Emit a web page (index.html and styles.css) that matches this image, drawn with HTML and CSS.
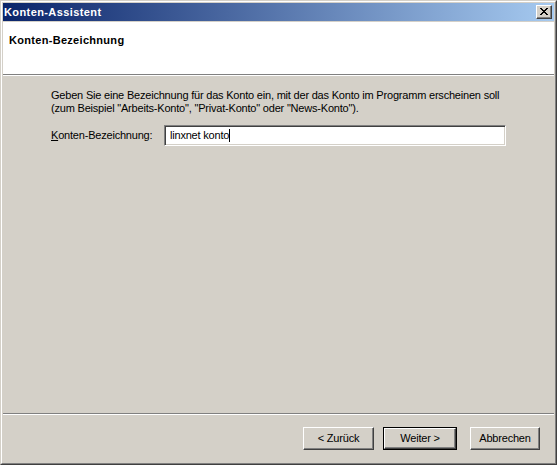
FILE: index.html
```html
<!DOCTYPE html>
<html>
<head>
<meta charset="utf-8">
<link rel="stylesheet" href="styles.css">
</head>
<body>
<div class="window">
  <div class="frame">
    <div class="titlebar">
      <span class="title">Konten-Assistent</span>
      <div class="close">
        <svg width="8" height="7" viewBox="0 0 8 7"><path d="M0 0h2v1h-2zM6 0h2v1h-2zM1 1h2v1h-2zM5 1h2v1h-2zM2 2h4v1h-4zM3 3h2v1h-2zM2 4h4v1h-4zM1 5h2v1h-2zM5 5h2v1h-2zM0 6h2v1h-2zM6 6h2v1h-2z" fill="#000"/></svg>
      </div>
    </div>
    <div class="client">
      <div class="header">Konten-Bezeichnung</div>
      <div class="content">
        <p class="desc">Geben Sie eine Bezeichnung für das Konto ein, mit der das Konto im Programm erscheinen soll<br>(zum Beispiel "Arbeits-Konto", "Privat-Konto" oder "News-Konto").</p>
        <div class="field">
          <span class="label"><u>K</u>onten-Bezeichnung:</span>
          <div class="input"><span class="val">linxnet konto</span><span class="caret"></span></div>
        </div>
      </div>
      <div class="footer">
        <div class="btn btn-back">&lt; Zurück</div>
        <div class="btn btn-next"><div class="inner">Weiter &gt;</div></div>
        <div class="btn btn-cancel">Abbrechen</div>
      </div>
    </div>
  </div>
</div>
</body>
</html>
```

FILE: styles.css
```css
html, body {
  margin: 0;
  padding: 0;
  background: #d4d0c8;
}
.window {
  width: 557px;
  height: 465px;
  box-sizing: border-box;
  border: 1px solid;
  border-color: #d4d0c8 #404040 #404040 #d4d0c8;
  font-family: "Liberation Sans", Arial, sans-serif;
  font-size: 11px;
  letter-spacing: -0.2px;
  color: #000;
}
.frame {
  height: 100%;
  box-sizing: border-box;
  border: 1px solid;
  border-color: #fff #808080 #808080 #fff;
  padding: 1px;
  background: #d4d0c8;
  display: flex;
  flex-direction: column;
}
.titlebar {
  height: 18px;
  background: linear-gradient(to right, #0a246a, #a6caf0);
  display: flex;
  align-items: center;
  justify-content: space-between;
  padding-left: 1px;
  padding-right: 2px;
}
.title {
  color: #fff;
  font-weight: bold;
  font-size: 11px;
  letter-spacing: 0.4px;
  line-height: 18px;
}
.close {
  width: 16px;
  height: 14px;
  box-sizing: border-box;
  background: #d4d0c8;
  border: 1px solid;
  border-color: #fff #404040 #404040 #fff;
  box-shadow: inset -1px -1px 0 #808080;
  display: flex;
  align-items: center;
  justify-content: center;
  padding: 0 1px 1px 0;
}
.close svg { display: block; }
.client {
  margin-top: 1px;
  flex: 1;
  display: flex;
  flex-direction: column;
}
.header {
  background: #fff;
  border-bottom: 1px solid #808080;
  box-shadow: 0 1px 0 #fff;
  font-weight: bold;
  letter-spacing: 0.3px;
  padding-left: 6px;
  line-height: 13px;
  padding-top: 12px;
  box-sizing: border-box;
  height: 53px;
}
.content {
  flex: 1;
  margin-top: 1px;
  padding: 13px 0 0 48px;
}
.desc {
  margin: 0;
  line-height: 13px;
}
.field {
  margin-top: 10px;
  display: flex;
  align-items: center;
}
.label {
  width: 113px;
  line-height: 13px;
}
.input {
  width: 342px;
  height: 21px;
  box-sizing: border-box;
  background: #fff;
  border: 1px solid;
  border-color: #808080 #fff #fff #808080;
  box-shadow: inset 1px 1px 0 #404040, inset -1px -1px 0 #d4d0c8;
  display: flex;
  align-items: center;
  padding-left: 5px;
}
.val { line-height: 13px; }
.caret {
  width: 1px;
  height: 13px;
  background: #000;
}
.footer {
  border-top: 1px solid #808080;
  box-shadow: inset 0 1px 0 #fff;
  height: 49px;
  box-sizing: border-box;
  display: flex;
  justify-content: flex-end;
  align-items: flex-start;
  padding: 13px 14px 0 0;
}
.btn {
  height: 23px;
  box-sizing: border-box;
  border: 1px solid;
  border-color: #fff #404040 #404040 #fff;
  box-shadow: inset -1px -1px 0 #808080;
  background: #d4d0c8;
  display: flex;
  align-items: center;
  justify-content: center;
  line-height: 13px;
}
.btn-back { width: 71px; }
.btn-next {
  width: 74px;
  margin-left: 9px;
  border: 1px solid #000;
  box-shadow: none;
  padding: 0;
}
.btn-next .inner {
  width: 100%;
  height: 100%;
  box-sizing: border-box;
  border: 1px solid;
  border-color: #fff #404040 #404040 #fff;
  box-shadow: inset -1px -1px 0 #808080;
  display: flex;
  align-items: center;
  justify-content: center;
}
.btn-cancel {
  width: 70px;
  margin-left: 13px;
}
```
